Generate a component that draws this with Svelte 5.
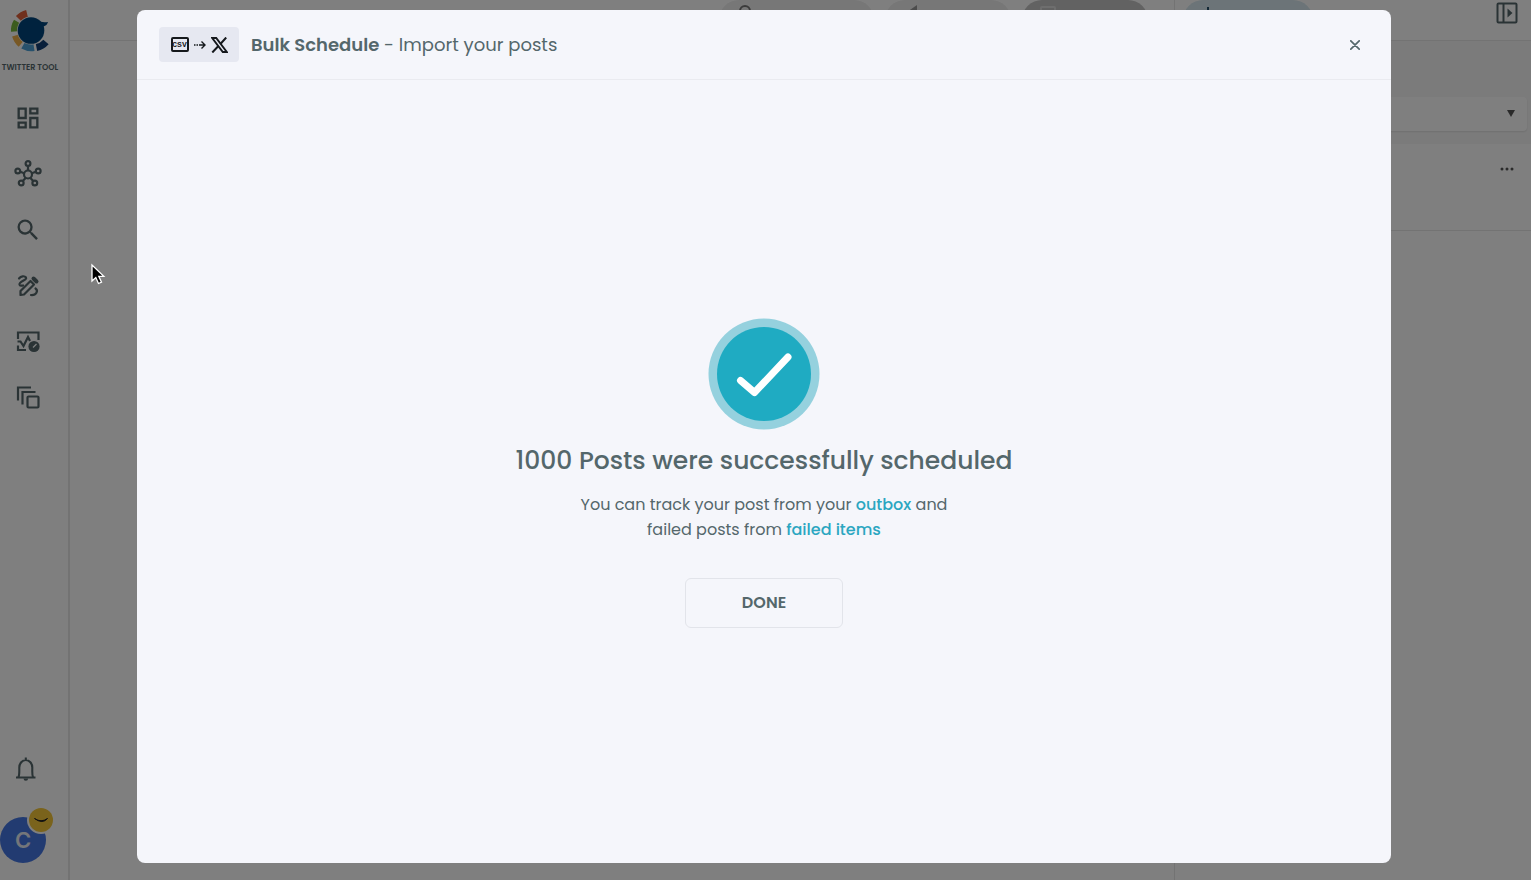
<script>
  let { count = 1000 } = $props();

  let open = $state(true);

  const close = () => (open = false);
</script>

<svelte:window onkeydown={(e) => e.key === 'Escape' && close()} />

<div class="app">
  <aside class="sidebar">
    <a class="brand" href="#home">
      <svg width="42" height="46" viewBox="0 0 42 46">
        <g fill="none" stroke-width="7">
          <path d="M9.500 10.500A17.500 17.500 0 0 1 18 5.500" stroke="#e0603a" />
          <path d="M5.500 23.500A17 17 0 0 1 8 13.500" stroke="#78b83c" />
          <path d="M12 36A17 17 0 0 1 6.500 27.500" stroke="#f0b14a" />
          <path d="M25 39.500A17 17 0 0 1 14 37.500" stroke="#4fa3d8" />
          <path d="M37 34A17 17 0 0 1 27.500 39.500" stroke="#123f75" />
        </g>
        <circle cx="22" cy="22.500" r="14" fill="#f8f8f8" />
        <circle cx="22" cy="22.500" r="13.300" fill="#00457c" />
        <path d="M28 12.500q5 2.500 11 1.500q-1 3.500-4.500 4.500l-.500 5z" fill="#00457c" />
      </svg>
      <span>TWITTER TOOL</span>
    </a>

    <nav>
      <a href="#dashboard" aria-label="Dashboard">
        <svg width="28" height="28" viewBox="0 0 24 24" fill="currentColor">
          <path d="M19 5v2h-4V5h4M9 5v6H5V5h4m10 8v6h-4v-6h4M9 17v2H5v-2h4M21 3h-8v6h8V3zM11 3H3v10h8V3zm10 8h-8v10h8V11zm-10 4H3v6h8v-6z" />
        </svg>
      </a>
      <a href="#network" aria-label="Network">
        <svg width="28" height="28" viewBox="0 0 28 28" fill="none" stroke="currentColor" stroke-width="2.200">
          <circle cx="14" cy="14.500" r="4" />
          <circle cx="14" cy="3.500" r="2.400" />
          <circle cx="3.800" cy="11" r="2.400" />
          <circle cx="24.200" cy="11" r="2.400" />
          <circle cx="7.200" cy="23" r="2.400" />
          <circle cx="20.800" cy="23" r="2.400" />
          <path d="M14 6v4.500M6.200 11.800l4 1.500M21.800 11.800l-4 1.500M8.800 21l2.800-3M19.200 21l-2.800-3" />
        </svg>
      </a>
      <a href="#search" aria-label="Search">
        <svg width="28" height="28" viewBox="0 0 24 24" fill="currentColor">
          <path d="M15.500 14h-.79l-.28-.27A6.471 6.471 0 0 0 16 9.500 6.500 6.500 0 1 0 9.500 16c1.610 0 3.090-.59 4.230-1.570l.27.28v.79l5 4.990L20.490 19l-4.990-5zm-6 0C7.010 14 5 11.990 5 9.500S7.010 5 9.500 5 14 7.010 14 9.500 11.990 14 9.500 14z" />
        </svg>
      </a>
      <a href="#compose" aria-label="Compose">
        <svg width="28" height="28" viewBox="0 0 28 28" fill="none" stroke="currentColor" stroke-width="2.200" stroke-linecap="round" stroke-linejoin="round">
          <path d="M5 6.500C7 4 10.500 3.500 12 5.500C13.500 8 5 9.500 5.500 12.500C5.800 14 8 13.800 9 13.500" />
          <path d="M6.500 19L16.500 9L20 12.500L10 22.500L6.500 23z" />
          <path d="M19.500 6.500L22.500 9.500" stroke-width="4" />
          <path d="M21.500 16.500C24.500 18.500 22.500 23.500 17 23" />
        </svg>
      </a>
      <a href="#activity" aria-label="Activity">
        <svg width="28" height="28" viewBox="0 0 28 28" fill="none" stroke="currentColor" stroke-width="2.200">
          <path d="M4 11V4.500H24.500V12M4 17.500v4.500h8" />
          <path d="M3.500 13.500h3l3 4.500l4.500-9l2 4" />
          <circle cx="20" cy="18.500" r="5.600" fill="currentColor" stroke="none" />
          <path d="M19 19.500l3.500-3.500" stroke="#fff" stroke-width="1.200" />
        </svg>
      </a>
      <a href="#library" aria-label="Library">
        <svg width="28" height="28" viewBox="0 0 28 28" fill="none" stroke="currentColor" stroke-width="2.200">
          <path d="M4 16.500V3.500H17M8.500 20.500V8H21.500" />
          <rect x="13.500" y="12.500" width="11" height="11" rx="1" />
        </svg>
      </a>
    </nav>

    <div class="account">
      <button class="bell" type="button" aria-label="Notifications">
        <svg width="28" height="28" viewBox="0 0 28 28" fill="none" stroke="currentColor" stroke-width="2.100">
          <path d="M4 22.500h19.500M6.500 22C7.500 20 7.300 18 7.300 12.500a6.500 7.500 0 0 1 13 0C20.300 18 20 20 21 22M13.800 5.500V2.500" />
          <path d="M11.500 23.500h4.600a2.300 2.300 0 0 1-4.600 0z" fill="currentColor" stroke="none" />
        </svg>
      </button>
      <button class="avatar" type="button" aria-label="Account">
        C
        <svg class="mood" width="28" height="28" viewBox="0 0 28 28">
          <circle cx="14" cy="14" r="14" fill="#fff" />
          <circle cx="14" cy="14" r="12" fill="#f4c638" />
          <path d="M7.500 12.500q6.500 4.500 13 0q-5 6-13 0z" fill="#222" stroke="#222" />
        </svg>
      </button>
    </div>
  </aside>

  <main>
    <header class="topbar">
      <button class="pill wide" type="button" aria-label="Accounts">
        <svg width="16" height="16" viewBox="0 0 16 16" fill="none" stroke="#777" stroke-width="2"><circle cx="8" cy="6" r="5" /></svg>
      </button>
      <button class="pill" type="button" aria-label="Drafts">
        <svg width="16" height="16" viewBox="0 0 16 16" fill="#999"><path d="M14 0v12L4 7z" /></svg>
      </button>
      <button class="pill dark" type="button" aria-label="Schedule">
        <svg width="16" height="16" viewBox="0 0 16 16" fill="none" stroke="#ddd" stroke-width="2"><rect x="1" y="2" width="14" height="12" rx="1" /></svg>
      </button>
    </header>
  </main>

  <section class="panel">
    <header class="topbar">
      <button class="pill teal" type="button" aria-label="New post">
        <svg width="16" height="16" viewBox="0 0 16 16" stroke="#26506a" stroke-width="2"><path d="M7 2v12M1 8h12" /></svg>
      </button>
      <button class="collapse" type="button" aria-label="Collapse panel">
        <svg width="22" height="22" viewBox="0 0 22 22" fill="none" stroke="currentColor" stroke-width="2">
          <rect x="1.500" y="1.500" width="19" height="19" rx="1" />
          <path d="M7.500 1.500v19" />
          <path d="M11.500 6.500v9l5-4.500z" fill="currentColor" stroke="none" />
        </svg>
      </button>
    </header>
    <div class="filter">
      <select aria-label="Filter posts"><option value=""></option></select>
      <svg width="8" height="7" viewBox="0 0 8 7"><path d="M0 0h8L4 7z" fill="#555" /></svg>
    </div>
    <div class="row">
      <button type="button" aria-label="More options">
        <svg width="14" height="4" viewBox="0 0 14 4" fill="#555">
          <circle cx="2" cy="2" r="1.500" /><circle cx="7" cy="2" r="1.500" /><circle cx="12" cy="2" r="1.500" />
        </svg>
      </button>
    </div>
  </section>
</div>

{#if open}
  <div class="overlay">
    <div class="modal" role="dialog" aria-modal="true" aria-labelledby="modal-title">
      <header class="modal-header">
        <div class="badge">
          <span class="csv">CSV</span>
          <svg width="12" height="10" viewBox="0 0 12 10" fill="none" stroke="#15181c" stroke-width="1.400">
            <path d="M0 5h1.500M2.500 5H4M5 5h6M7.500 1.500L11 5L7.500 8.500" />
          </svg>
          <svg width="17" height="16" viewBox="0 0 17 16">
            <path d="M1.200 1h4L15.800 15h-4z" fill="none" stroke="#15181c" stroke-width="1.900" />
            <path d="M15.200.500L9.400 7M7.400 9L1.300 15.500" stroke="#15181c" stroke-width="2" />
          </svg>
        </div>
        <h1 id="modal-title"><strong>Bulk Schedule</strong> - Import your posts</h1>
        <button class="close" type="button" aria-label="Close" onclick={close}>
          <svg width="10" height="10" viewBox="0 0 10 10" stroke="currentColor" stroke-width="1.700" stroke-linecap="round">
            <path d="M.800.800l8.400 8.400M9.200.800L.800 9.200" />
          </svg>
        </button>
      </header>

      <div class="modal-body">
        <svg width="112" height="112" viewBox="0 0 112 112">
          <circle cx="56" cy="56" r="55.500" fill="#95d1de" />
          <circle cx="56" cy="56" r="47" fill="#1fabc2" />
          <path d="M32.500 62.500L46.500 74.500L80 39" fill="none" stroke="#fff" stroke-width="7" stroke-linecap="round" stroke-linejoin="round" />
        </svg>
        <h2>{count} Posts were successfully scheduled</h2>
        <p>
          You can track your post from your <a href="#outbox">outbox</a> and<br />
          failed posts from <a href="#failed">failed items</a>
        </p>
        <button class="done" type="button" onclick={close}>DONE</button>
      </div>
    </div>
  </div>
{/if}

<svg class="cursor" width="16" height="24" viewBox="0 0 16 24">
  <path d="M2 2v16l3.800-3.500l2.700 6l3-1.300l-2.700-5.900h5z" fill="#000" stroke="#fff" stroke-width="1.300" />
</svg>

<style>
  :global(body) {
    margin: 0;
    background: #fff;
    font-family: Poppins, Inter, sans-serif;
    color: #54676b;
  }

  button {
    padding: 0;
    border: none;
    background: none;
    font: inherit;
    color: inherit;
    cursor: pointer;
  }

  svg {
    display: block;
    flex-shrink: 0;
  }

  .app {
    display: flex;
    min-height: 100vh;
  }

  .sidebar {
    display: flex;
    flex-direction: column;
    justify-content: space-between;
    align-items: flex-start;
    box-sizing: border-box;
    width: 70px;
    padding: 8px 0 17px;
    border-right: 2px solid #e6e6e6;
  }

  .brand {
    display: flex;
    flex-direction: column;
    align-items: center;
    gap: 8px;
    width: 60px;
    color: inherit;
    text-decoration: none;
  }

  .brand span {
    font-size: 8px;
    font-weight: 600;
    line-height: 12px;
    white-space: nowrap;
  }

  nav {
    display: flex;
    flex-direction: column;
    gap: 28px;
    flex: 1;
    padding: 30px 0 0 14px;
  }

  nav a {
    color: inherit;
  }

  .account {
    display: flex;
    flex-direction: column;
    gap: 34px;
  }

  .bell {
    padding-left: 12px;
  }

  .avatar {
    position: relative;
    width: 46px;
    height: 46px;
    border-radius: 50%;
    background: #4476e2;
    color: #e8ecf4;
    font-family: Inter, sans-serif;
    font-size: 22px;
    font-weight: 600;
  }

  .mood {
    position: absolute;
    top: -11px;
    right: -9px;
  }

  main {
    flex: 1;
  }

  .topbar {
    display: flex;
    justify-content: flex-end;
    gap: 11px;
    box-sizing: border-box;
    height: 41px;
    padding-right: 26px;
    border-bottom: 1px solid #e6e6e6;
  }

  .pill {
    display: flex;
    box-sizing: border-box;
    width: 126px;
    height: 40px;
    padding: 5px 18px;
    border-radius: 20px;
    background: #eee;
  }

  .pill.wide {
    width: 155px;
  }

  .pill.dark {
    background: #c4c4c4;
  }

  .pill.teal {
    width: 130px;
    background: #d8e9f0;
  }

  .panel {
    box-sizing: border-box;
    width: 357px;
    border-left: 1px solid #e6e6e6;
  }

  .panel .topbar {
    justify-content: space-between;
    padding: 0 13px 0 8px;
  }

  .collapse {
    align-self: flex-start;
    padding-top: 2px;
  }

  .filter {
    position: relative;
    padding: 56px 4px 13px 8px;
    background: #f7f7f7;
  }

  .filter select {
    display: block;
    appearance: none;
    width: 100%;
    height: 34px;
    border: none;
    border-radius: 4px;
    background: #fff;
    box-shadow: 0 1px 2px #ddd;
  }

  .filter svg {
    position: absolute;
    right: 16px;
    bottom: 27px;
    pointer-events: none;
  }

  .row {
    display: flex;
    justify-content: flex-end;
    align-items: flex-start;
    box-sizing: border-box;
    height: 87px;
    padding: 23px 17px;
    border-bottom: 1px solid #e6e6e6;
  }

  .overlay {
    display: flex;
    position: fixed;
    inset: 0;
    padding: 10px 140px 17px 137px;
    background: rgba(0, 0, 0, 0.5);
  }

  .modal {
    display: flex;
    flex-direction: column;
    flex: 1;
    border-radius: 8px;
    background: #f5f6fb;
  }

  .modal-header {
    display: flex;
    align-items: center;
    gap: 12px;
    padding: 17px 27px 17px 22px;
    border-bottom: 1px solid #eaebf0;
  }

  .badge {
    display: flex;
    align-items: center;
    justify-content: center;
    gap: 5px;
    width: 80px;
    height: 35px;
    border-radius: 4px;
    background: #e6e8f1;
  }

  .csv {
    box-sizing: border-box;
    width: 18px;
    border: 2px solid #15181c;
    border-radius: 2px;
    color: #15181c;
    font-family: "Liberation Mono", monospace;
    font-size: 8px;
    font-weight: 700;
    line-height: 11px;
    display: flex;
    justify-content: center;
  }

  h1 {
    flex: 1;
    margin: 0;
    font-size: 18px;
    font-weight: 400;
    line-height: 24px;
  }

  h1 strong {
    font-weight: 600;
  }

  .close {
    padding: 4px;
  }

  .modal-body {
    display: flex;
    flex-direction: column;
    align-items: center;
    justify-content: center;
    flex: 1;
    padding-top: 2px;
    text-align: center;
  }

  h2 {
    margin: 12px 0;
    font-size: 25px;
    font-weight: 500;
    line-height: 38px;
  }

  p {
    margin: 0 0 36px;
    font-size: 16px;
    line-height: 25px;
  }

  p a {
    color: #2ba6c1;
    font-weight: 500;
    text-decoration: none;
  }

  .done {
    width: 158px;
    height: 50px;
    border: 1px solid #e2e4ea;
    border-radius: 6px;
    font-size: 16px;
    font-weight: 600;
  }

  .cursor {
    position: fixed;
    top: 263px;
    left: 90px;
    pointer-events: none;
  }
</style>
